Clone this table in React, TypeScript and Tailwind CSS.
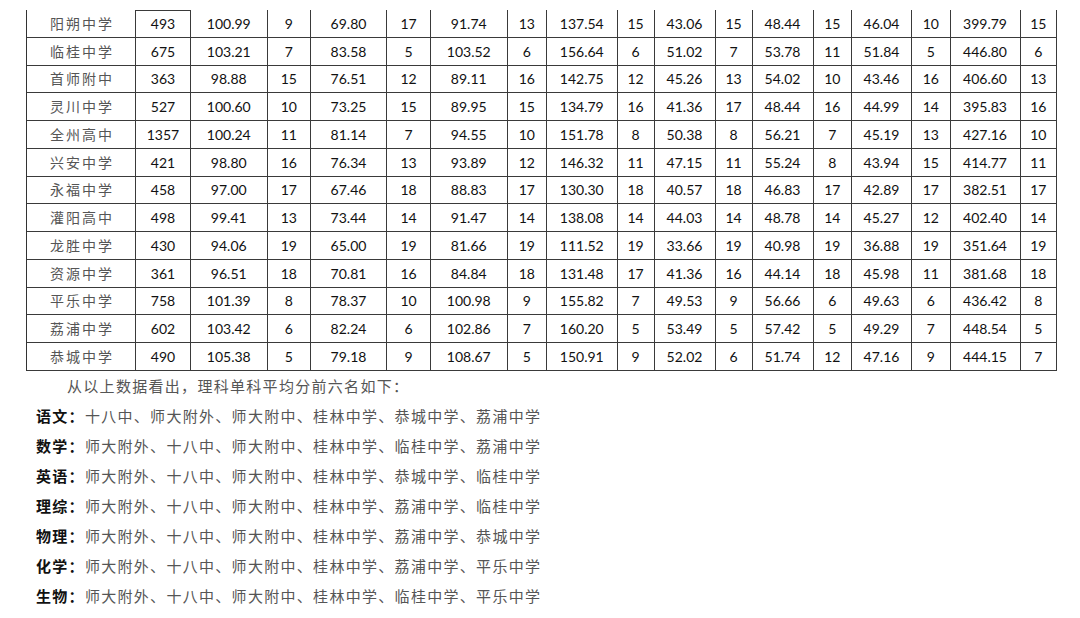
import React from "react";

const widths = [109, 55, 76.5, 43.5, 76, 44, 76.5, 39.5, 70.5, 37, 61, 37, 61, 38.5, 60, 38.5, 70, 36.5];

const rows: string[][] = [
  ["阳朔中学", "493", "100.99", "9", "69.80", "17", "91.74", "13", "137.54", "15", "43.06", "15", "48.44", "15", "46.04", "10", "399.79", "15"],
  ["临桂中学", "675", "103.21", "7", "83.58", "5", "103.52", "6", "156.64", "6", "51.02", "7", "53.78", "11", "51.84", "5", "446.80", "6"],
  ["首师附中", "363", "98.88", "15", "76.51", "12", "89.11", "16", "142.75", "12", "45.26", "13", "54.02", "10", "43.46", "16", "406.60", "13"],
  ["灵川中学", "527", "100.60", "10", "73.25", "15", "89.95", "15", "134.79", "16", "41.36", "17", "48.44", "16", "44.99", "14", "395.83", "16"],
  ["全州高中", "1357", "100.24", "11", "81.14", "7", "94.55", "10", "151.78", "8", "50.38", "8", "56.21", "7", "45.19", "13", "427.16", "10"],
  ["兴安中学", "421", "98.80", "16", "76.34", "13", "93.89", "12", "146.32", "11", "47.15", "11", "55.24", "8", "43.94", "15", "414.77", "11"],
  ["永福中学", "458", "97.00", "17", "67.46", "18", "88.83", "17", "130.30", "18", "40.57", "18", "46.83", "17", "42.89", "17", "382.51", "17"],
  ["灌阳高中", "498", "99.41", "13", "73.44", "14", "91.47", "14", "138.08", "14", "44.03", "14", "48.78", "14", "45.27", "12", "402.40", "14"],
  ["龙胜中学", "430", "94.06", "19", "65.00", "19", "81.66", "19", "111.52", "19", "33.66", "19", "40.98", "19", "36.88", "19", "351.64", "19"],
  ["资源中学", "361", "96.51", "18", "70.81", "16", "84.84", "18", "131.48", "17", "41.36", "16", "44.14", "18", "45.98", "11", "381.68", "18"],
  ["平乐中学", "758", "101.39", "8", "78.37", "10", "100.98", "9", "155.82", "7", "49.53", "9", "56.66", "6", "49.63", "6", "436.42", "8"],
  ["荔浦中学", "602", "103.42", "6", "82.24", "6", "102.86", "7", "160.20", "5", "53.49", "5", "57.42", "5", "49.29", "7", "448.54", "5"],
  ["恭城中学", "490", "105.38", "5", "79.18", "9", "108.67", "5", "150.91", "9", "52.02", "6", "51.74", "12", "47.16", "9", "444.15", "7"],
];

const lines: [string, string][] = [
  ["语文", "十八中、师大附外、师大附中、桂林中学、恭城中学、荔浦中学"],
  ["数学", "师大附外、十八中、师大附中、桂林中学、临桂中学、荔浦中学"],
  ["英语", "师大附外、十八中、师大附中、桂林中学、恭城中学、临桂中学"],
  ["理综", "师大附外、十八中、师大附中、桂林中学、荔浦中学、临桂中学"],
  ["物理", "师大附外、十八中、师大附中、桂林中学、荔浦中学、恭城中学"],
  ["化学", "师大附外、十八中、师大附中、桂林中学、荔浦中学、平乐中学"],
  ["生物", "师大附外、十八中、师大附中、桂林中学、临桂中学、平乐中学"],
];

const cjk = "font-['Noto_Sans_CJK_SC',sans-serif]";

export default function App() {
  return (
    <div className="w-[1080px] h-[618px] bg-white overflow-hidden pt-[10px]">
      <div className="ml-[26px] w-[1031px] border-l border-[#333]">
        {rows.map((r, ri) => (
          <div key={ri} className="flex h-[27.75px]">
            {r.map((c, ci) => (
              <div
                key={ci}
                style={{ width: widths[ci] }}
                className={
                  "shrink-0 flex items-center justify-center border-r border-b border-[#3a3a3a] " +
                  (ri === 0 && ci === 1 ? "border-t " : "") +
                  (ci === 0
                    ? `${cjk} text-[14px] tracking-[2px] pl-[2px] text-[#555]`
                    : "font-['Lato',sans-serif] text-[14px] text-[#111]")
                }
              >
                {c}
              </div>
            ))}
          </div>
        ))}
      </div>
      <div className={`${cjk} text-[15px] leading-[30px] tracking-[1.3px] text-[#555] pl-[36px]`}>
        <p className="indent-[31px]">从以上数据看出，理科单科平均分前六名如下：</p>
        {lines.map(([label, text]) => (
          <p key={label}>
            <span className="font-bold text-[#111]">{label}：</span>
            {text}
          </p>
        ))}
      </div>
    </div>
  );
}
